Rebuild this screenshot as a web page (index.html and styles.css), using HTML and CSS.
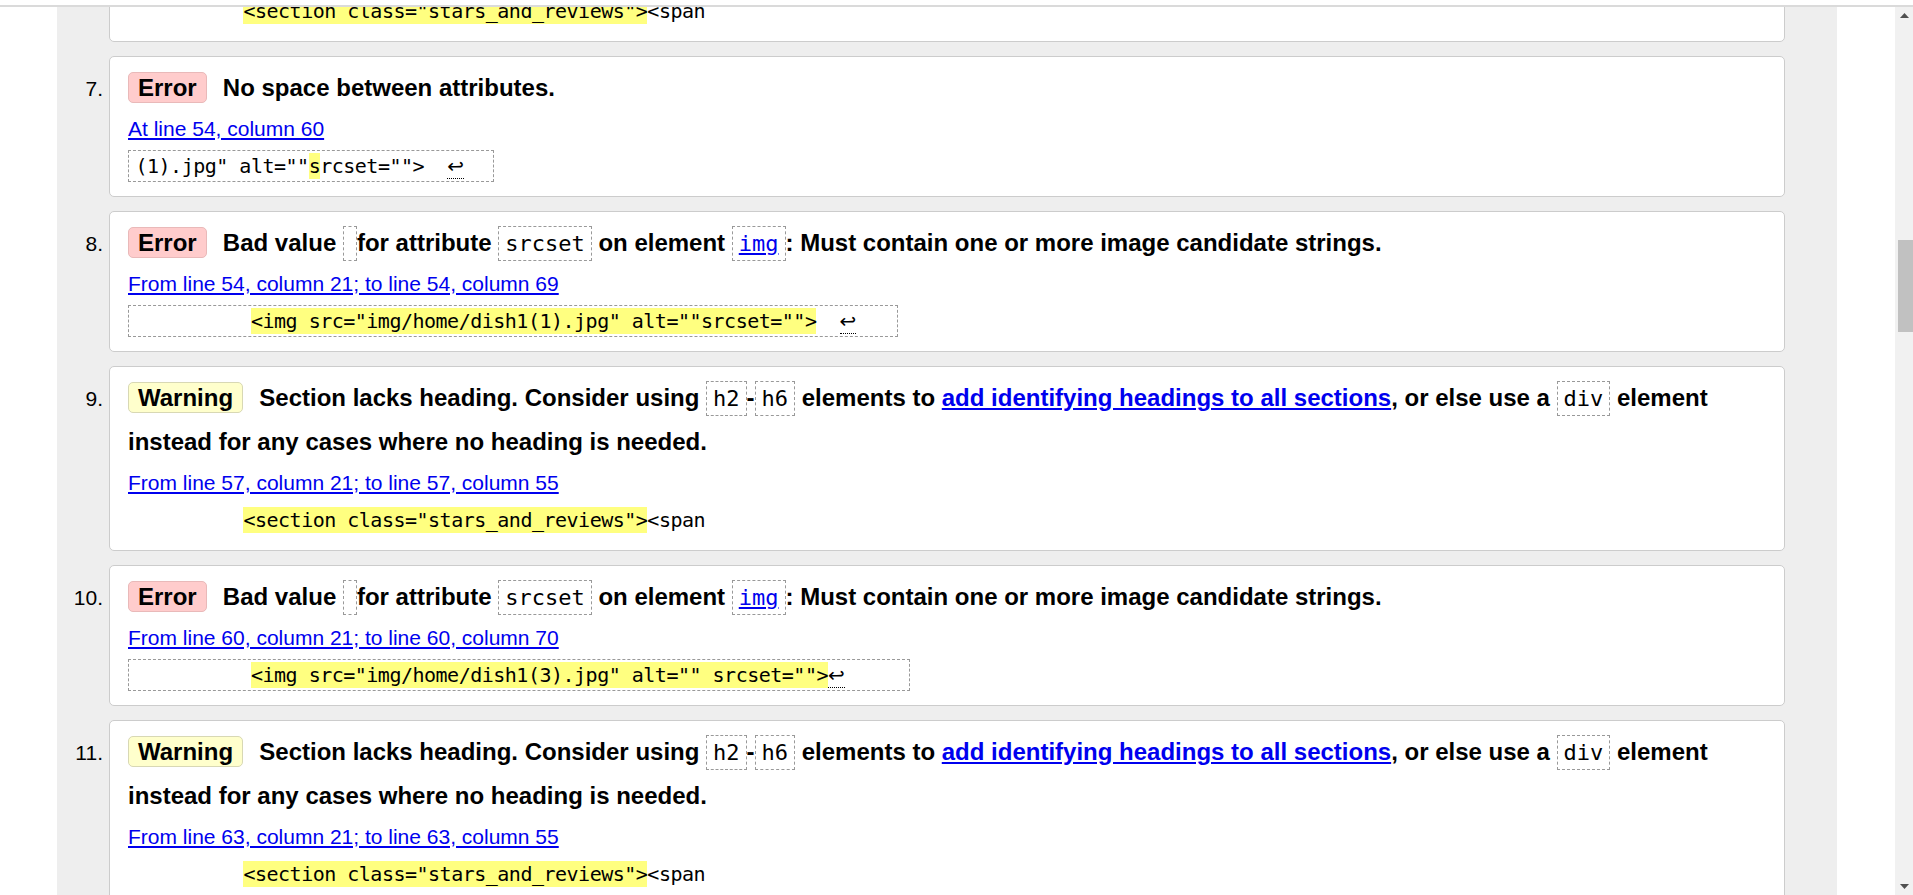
FILE: index.html
```html
<!DOCTYPE html>
<html lang="en">
<head>
<meta charset="utf-8">
<title>Validator messages</title>
<link rel="stylesheet" href="styles.css">
</head>
<body>
<div class="topbar"></div>
<div class="frame">
  <div class="gutter-left"></div>
  <main class="results">
    <ol class="messages">
      <li class="item">
        <span class="num">6.</span>
        <div class="card">
          <p class="msg"><span class="badge warning">Warning</span> Section lacks heading. Consider using <code>h2</code>-<code>h6</code> elements to <a href="#">add identifying headings to all sections</a>, or else use a <code>div</code> element instead for any cases where no heading is needed.</p>
          <div class="loc"><a href="#">From line 51, column 21; to line 51, column 55</a></div>
          <div class="extract plain">          <mark>&lt;section class="stars_and_reviews"&gt;</mark>&lt;span</div>
        </div>
      </li>
      <li class="item">
        <span class="num">7.</span>
        <div class="card">
          <p class="msg"><span class="badge error">Error</span> No space between attributes.</p>
          <div class="loc"><a href="#">At line 54, column 60</a></div>
          <div class="extract">(1).jpg" alt=""<mark>s</mark>rcset=""&gt;  <span class="lf">↩</span>  </div>
        </div>
      </li>
      <li class="item">
        <span class="num">8.</span>
        <div class="card">
          <p class="msg"><span class="badge error">Error</span> Bad value <code></code>for attribute <code>srcset</code> on element <code><a href="#">img</a></code>: Must contain one or more image candidate strings.</p>
          <div class="loc"><a href="#">From line 54, column 21; to line 54, column 69</a></div>
          <div class="extract">          <mark>&lt;img src="img/home/dish1(1).jpg" alt=""srcset=""&gt;</mark>  <span class="lf">↩</span>   </div>
        </div>
      </li>
      <li class="item">
        <span class="num">9.</span>
        <div class="card">
          <p class="msg"><span class="badge warning">Warning</span> Section lacks heading. Consider using <code>h2</code>-<code>h6</code> elements to <a href="#">add identifying headings to all sections</a>, or else use a <code>div</code> element instead for any cases where no heading is needed.</p>
          <div class="loc"><a href="#">From line 57, column 21; to line 57, column 55</a></div>
          <div class="extract plain">          <mark>&lt;section class="stars_and_reviews"&gt;</mark>&lt;span</div>
        </div>
      </li>
      <li class="item">
        <span class="num">10.</span>
        <div class="card">
          <p class="msg"><span class="badge error">Error</span> Bad value <code></code>for attribute <code>srcset</code> on element <code><a href="#">img</a></code>: Must contain one or more image candidate strings.</p>
          <div class="loc"><a href="#">From line 60, column 21; to line 60, column 70</a></div>
          <div class="extract">          <mark>&lt;img src="img/home/dish1(3).jpg" alt="" srcset=""&gt;</mark><span class="lf">↩</span>     </div>
        </div>
      </li>
      <li class="item">
        <span class="num">11.</span>
        <div class="card">
          <p class="msg"><span class="badge warning">Warning</span> Section lacks heading. Consider using <code>h2</code>-<code>h6</code> elements to <a href="#">add identifying headings to all sections</a>, or else use a <code>div</code> element instead for any cases where no heading is needed.</p>
          <div class="loc"><a href="#">From line 63, column 21; to line 63, column 55</a></div>
          <div class="extract plain">          <mark>&lt;section class="stars_and_reviews"&gt;</mark>&lt;span</div>
        </div>
      </li>
    </ol>
  </main>
  <div class="gutter-right"></div>
  <div class="scrollbar">
    <div class="sb-btn"><svg width="9" height="5" viewBox="0 0 9 5"><polygon points="0,5 4.5,0 9,5" fill="#505050"/></svg></div>
    <div class="sb-thumb"></div>
    <div class="sb-btn sb-down"><svg width="9" height="5" viewBox="0 0 9 5"><polygon points="0,0 9,0 4.5,5" fill="#505050"/></svg></div>
  </div>
</div>
</body>
</html>
```
FILE: styles.css
```css
* { box-sizing: border-box; }
html, body { margin: 0; height: 100%; }
body {
  font-family: "Liberation Sans", Arial, sans-serif;
  color: #000;
  background: #fff;
  overflow: hidden;
  display: flex;
  flex-direction: column;
}
.topbar {
  flex: none;
  height: 7px;
  border-bottom: 2px solid #dadada;
}
.frame {
  flex: 1;
  min-height: 0;
  display: flex;
}
.gutter-left { flex: none; width: 57px; }
.results {
  flex: none;
  width: 1780px;
  background: #eee;
  overflow: hidden;
}
.gutter-right { flex: 1; }

.messages {
  list-style: none;
  margin: -150px 0 0;
  padding: 0 52px 0 6px;
  display: flex;
  flex-direction: column;
  gap: 14px;
}
.item {
  display: flex;
  align-items: baseline;
  gap: 6px;
}
.num {
  flex: none;
  width: 40px;
  text-align: right;
  font-size: 21px;
}
.card {
  flex: 1;
  min-width: 0;
  background: #fff;
  border: 1px solid #ccc;
  border-radius: 5px;
  padding: 9px 18px 14px;
}
.msg {
  margin: 0;
  font-size: 24px;
  line-height: 44px;
  font-weight: bold;
}
.msg a { color: #0000ee; text-decoration: underline; }
.badge {
  display: inline-block;
  line-height: 25px;
  padding: 2px 9px;
  border: 1px solid;
  border-radius: 5px;
  margin-right: 9.5px;
}
.badge.error { background: #ffcccc; border-color: #e9b9b9; }
.badge.warning { background: #ffffcc; border-color: #d8d8b4; }
.msg code {
  font-family: "DejaVu Sans Mono", "Liberation Mono", monospace;
  font-weight: normal;
  font-size: 22px;
  line-height: 1;
  padding: 4px 6px;
  border: 1px dashed #999;
}
.loc {
  margin-top: 1px;
  font-size: 21px;
  line-height: 36px;
}
.loc a { color: #0000ee; text-decoration: underline; }
.extract {
  width: fit-content;
  margin-top: 3px;
  font-family: "DejaVu Sans Mono", "Liberation Mono", monospace;
  font-size: 20px;
  line-height: 30px;
  letter-spacing: -0.5px;
  white-space: pre;
  border: 1px dashed #999;
  padding: 0 6.5px;
}
.extract.plain {
  border: 0;
  padding: 1px 0;
}
.extract mark {
  background: #ffff80;
  color: #000;
  padding: 1px 0;
}
.lf {
  font-family: "DejaVu Sans", sans-serif;
  letter-spacing: 0;
  border-bottom: 1px dotted #000;
}

.scrollbar {
  flex: none;
  width: 18px;
  background: #f1f1f1;
  display: flex;
  flex-direction: column;
  align-items: center;
}
.sb-btn {
  flex: none;
  height: 17px;
  width: 100%;
  display: flex;
  align-items: center;
  justify-content: center;
}
.sb-thumb {
  flex: none;
  width: 15px;
  height: 92px;
  margin-top: 216px;
  margin-left: 2px;
  background: #c1c1c1;
}
.sb-down { margin-top: auto; }
```
